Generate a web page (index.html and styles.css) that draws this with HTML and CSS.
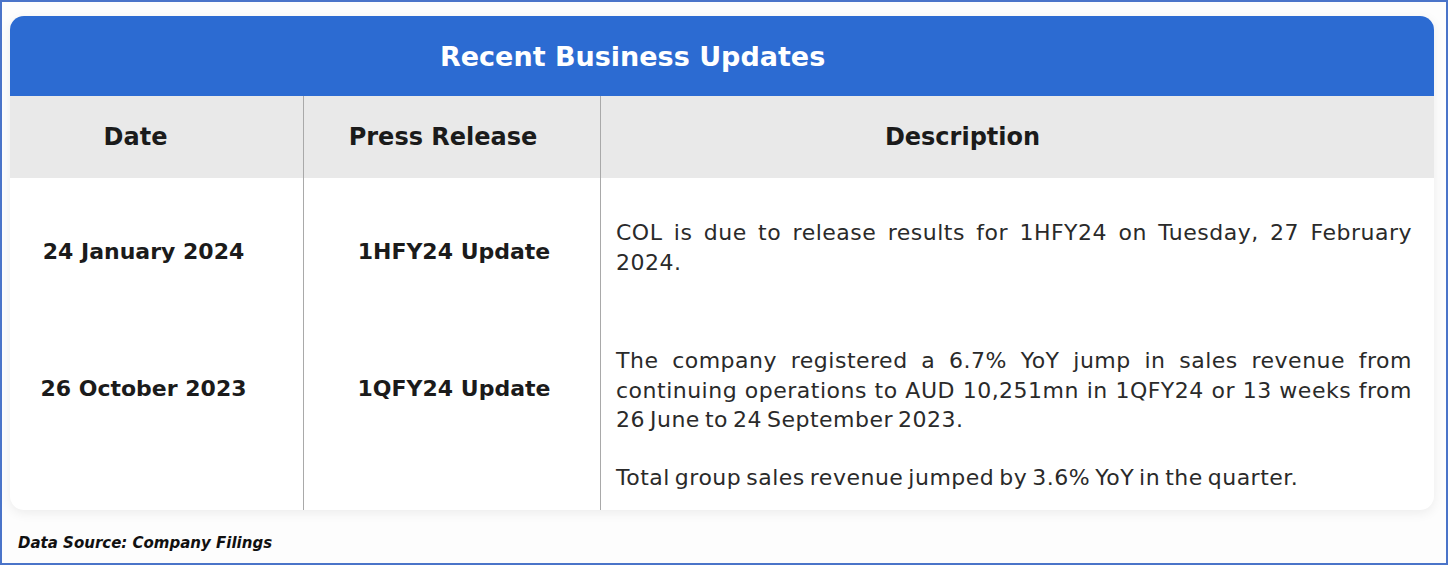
FILE: index.html
```html
<!DOCTYPE html>
<html>
<head>
<meta charset="utf-8">
<link rel="stylesheet" href="styles.css">
</head>
<body>
<div class="frame">
  <div class="card">
    <div class="title">Recent Business Updates</div>
    <div class="grid">
      <div class="th c1">Date</div>
      <div class="th c2">Press Release</div>
      <div class="th c3">Description</div>

      <div class="td c1 r1">24 January 2024</div>
      <div class="td c2 r1">1HFY24 Update</div>
      <div class="td c3 r1 desc"><p>COL is due to release results for 1HFY24 on Tuesday, 27 February 2024.</p></div>

      <div class="td c1 r2">26 October 2023</div>
      <div class="td c2 r2">1QFY24 Update</div>
      <div class="td c3 r2 desc">
        <p>The company registered a 6.7% YoY jump in sales revenue from continuing operations to AUD 10,251mn in 1QFY24 or 13 weeks from 26 June to 24 September 2023.</p>
        <p>Total group sales revenue jumped by 3.6% YoY in the quarter.</p>
      </div>
    </div>
  </div>
  <div class="source">Data Source: Company Filings</div>
</div>
</body>
</html>
```
FILE: styles.css
```css
html, body {
  margin: 0;
  padding: 0;
  background: #fff;
}
.frame {
  width: 1448px;
  height: 565px;
  box-sizing: border-box;
  border: 2px solid #4a74c9;
  padding: 14px 12px 0 8px;
  font-family: "DejaVu Sans", sans-serif;
  background: #fdfdfd;
}
.card {
  width: 1424px;
  height: 494px;
  background: #fff;
  border-radius: 14px;
  box-shadow: 0 3px 12px rgba(0,0,0,0.07);
  overflow: hidden;
  display: flex;
  flex-direction: column;
}
.title {
  flex: 0 0 80px;
  background: #2c6bd2;
  color: #fff;
  font-weight: 700;
  font-size: 27px;
  display: flex;
  align-items: center;
  padding-left: 430px;
}
.grid {
  flex: 1;
  min-height: 0;
  display: grid;
  grid-template-columns: 294px 297px 833px;
  grid-template-rows: 82px 146px 1fr;
}
.th {
  background: #e9e9e9;
  font-weight: 700;
  font-size: 24px;
  color: #1b1b1b;
  display: flex;
  align-items: center;
  justify-content: center;
}
.th.c1 { padding-right: 42px; }
.th.c2 { padding-right: 18px; }
.th.c3 { padding-right: 110px; }
.c1 { border-right: 1px solid #a9a9a9; }
.c2 { border-right: 1px solid #a9a9a9; }
.td {
  font-size: 22px;
  font-weight: 700;
  color: #1b1b1b;
  display: flex;
  justify-content: center;
}
.td.c1 { padding-right: 26px; }
.td.c2 { padding-left: 4px; }
.td.r1 { align-items: center; }
.td.r2 { align-items: flex-start; padding-top: 52px; }
.td.desc {
  display: block;
  font-weight: 400;
  color: #2a2a2a;
  font-size: 22px;
  letter-spacing: 0.5px;
  word-spacing: -2.5px;
  line-height: 29.5px;
  text-align: justify;
  padding: 0 22px 0 15px;
}
.td.desc.r1 { padding-top: 40px; }
.td.desc.r2 { padding-top: 22px; }
.desc p { margin: 0 0 28px; }
.desc p:last-child { margin-bottom: 0; }
.source {
  padding: 24px 0 0 8px;
  font-size: 15px;
  font-weight: 700;
  font-style: italic;
  color: #111;
}
```
